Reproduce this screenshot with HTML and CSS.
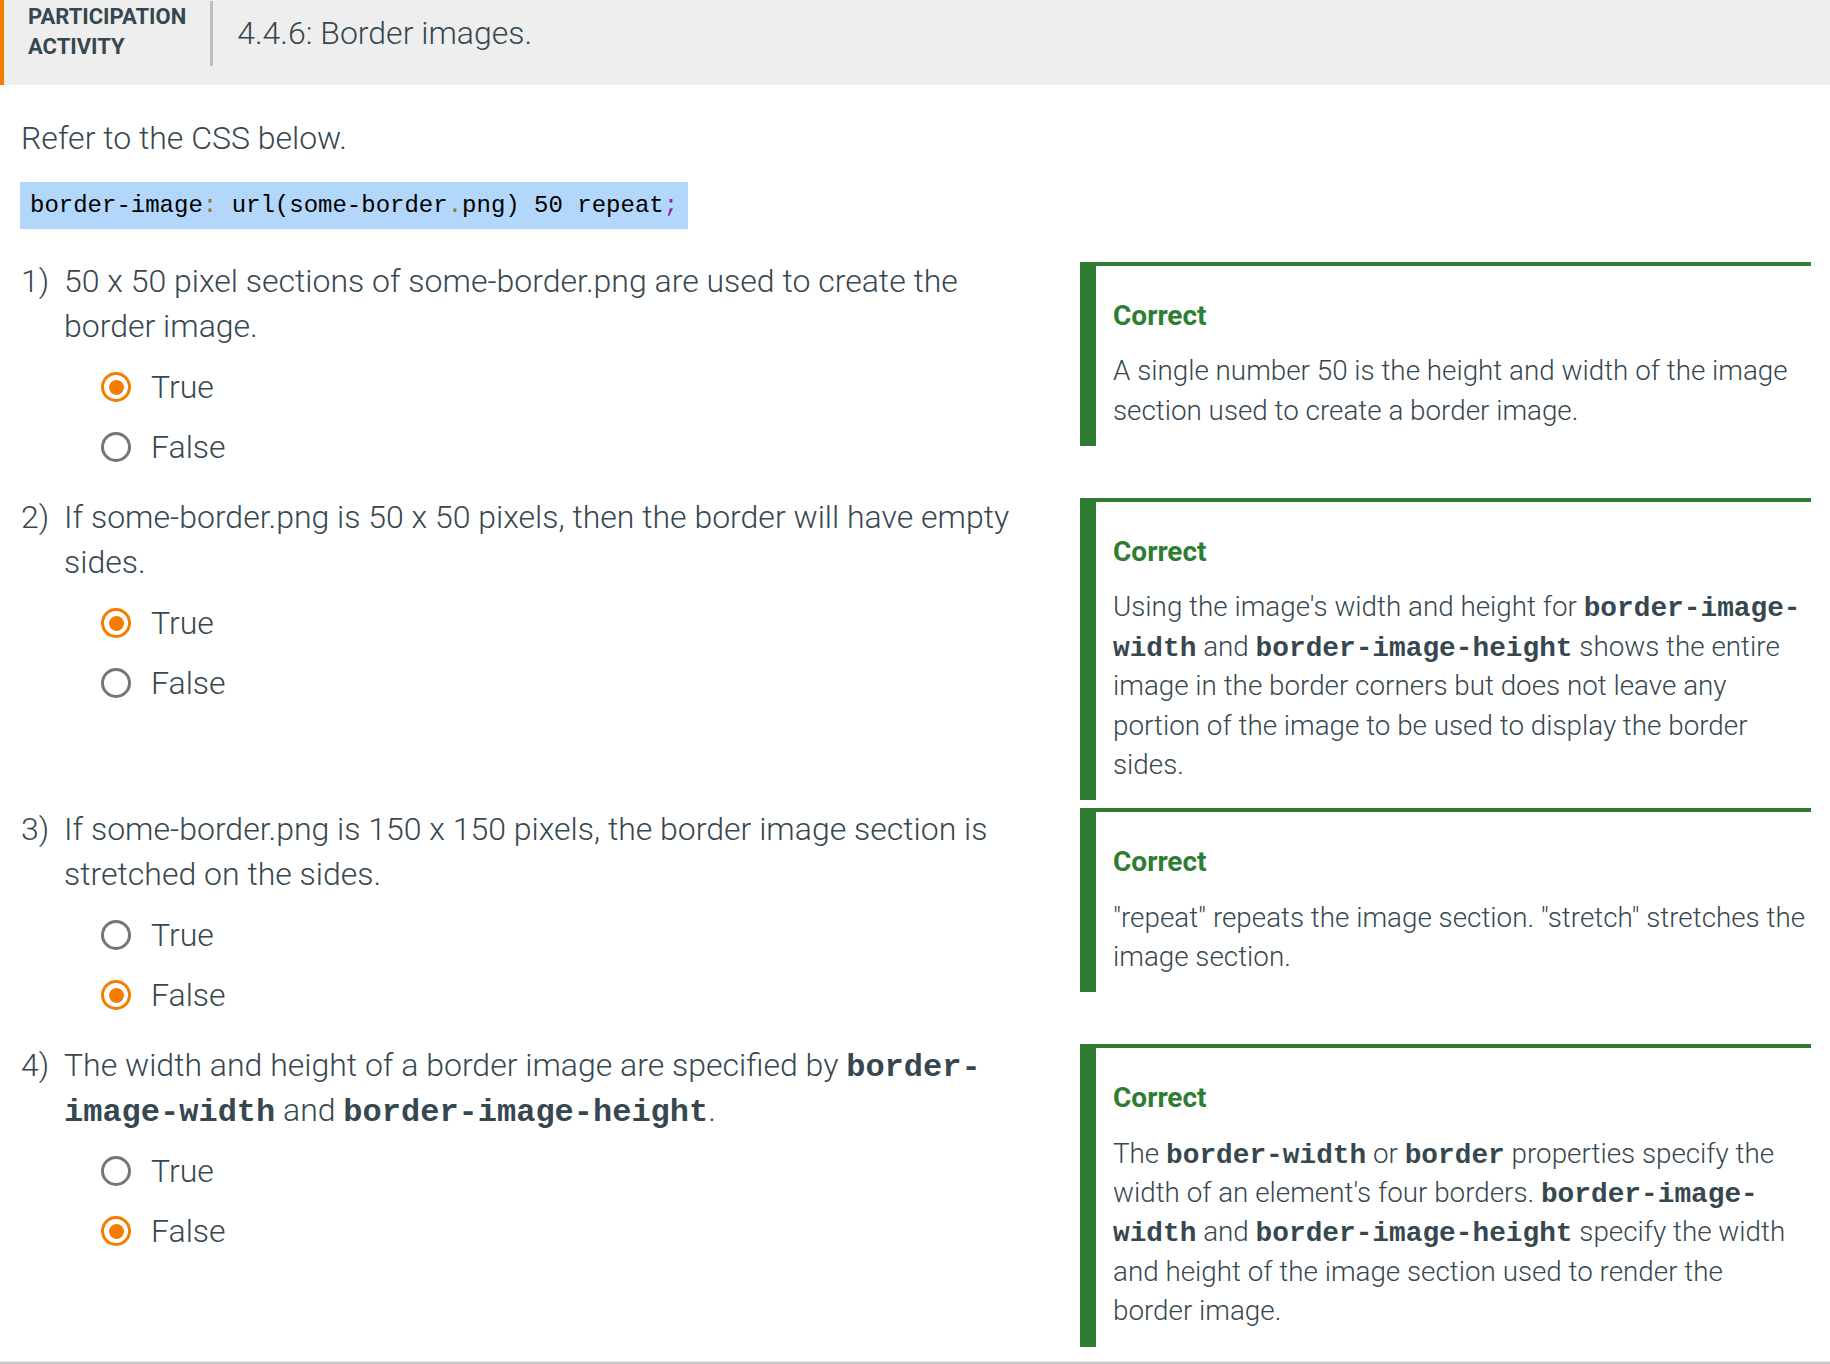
FILE: index.html
```html
<!DOCTYPE html>
<html lang="en">
<head>
<meta charset="utf-8">
<title>4.4.6: Border images.</title>
<link rel="stylesheet" href="styles.css">
</head>
<body>
<div class="activity">
  <header class="activity-header">
    <div class="activity-label">Participation<br>Activity</div>
    <div class="activity-divider"></div>
    <h1 class="activity-title">4.4.6: Border images.</h1>
  </header>

  <div class="activity-body">
    <p class="instructions">Refer to the CSS below.</p>
    <pre class="code-block">border-image<span class="tok-punct">:</span> url(some-border<span class="tok-punct">.</span>png) 50 repeat<span class="tok-semi">;</span></pre>

    <div class="question-list">
      <div class="question-row">
        <div class="question">
          <div class="prompt"><span class="q-num">1)</span><span class="q-body">50 x 50 pixel sections of some-border.png are used to create the border image.</span></div>
          <div class="choices">
            <div class="choice"><span class="radio checked"></span><span class="choice-label">True</span></div>
            <div class="choice"><span class="radio"></span><span class="choice-label">False</span></div>
          </div>
        </div>
        <div class="feedback">
          <h2 class="feedback-title">Correct</h2>
          <p class="feedback-text">A single number 50 is the height and width of the image section used to create a border image.</p>
        </div>
      </div>

      <div class="question-row">
        <div class="question">
          <div class="prompt"><span class="q-num">2)</span><span class="q-body">If some-border.png is 50 x 50 pixels, then the border will have empty sides.</span></div>
          <div class="choices">
            <div class="choice"><span class="radio checked"></span><span class="choice-label">True</span></div>
            <div class="choice"><span class="radio"></span><span class="choice-label">False</span></div>
          </div>
        </div>
        <div class="feedback">
          <h2 class="feedback-title">Correct</h2>
          <p class="feedback-text">Using the image's width and height for <code>border-image-</code><code>width</code> and <code>border-image-height</code> shows the entire image in the border corners but does not leave any portion of the image to be used to display the border sides.</p>
        </div>
      </div>

      <div class="question-row row-3">
        <div class="question">
          <div class="prompt"><span class="q-num">3)</span><span class="q-body">If some-border.png is 150 x 150 pixels, the border image section is stretched on the sides.</span></div>
          <div class="choices">
            <div class="choice"><span class="radio"></span><span class="choice-label">True</span></div>
            <div class="choice"><span class="radio checked"></span><span class="choice-label">False</span></div>
          </div>
        </div>
        <div class="feedback">
          <h2 class="feedback-title">Correct</h2>
          <p class="feedback-text">"repeat" repeats the image section. "stretch" stretches the image section.</p>
        </div>
      </div>

      <div class="question-row row-4">
        <div class="question">
          <div class="prompt"><span class="q-num">4)</span><span class="q-body">The width and height of a border image are specified by <code>border-</code><code>image-width</code> and <code>border-image-height</code>.</span></div>
          <div class="choices">
            <div class="choice"><span class="radio"></span><span class="choice-label">True</span></div>
            <div class="choice"><span class="radio checked"></span><span class="choice-label">False</span></div>
          </div>
        </div>
        <div class="feedback">
          <h2 class="feedback-title">Correct</h2>
          <p class="feedback-text">The <code>border-width</code> or <code>border</code> properties specify the width of an element's four borders. <code>border-image-</code><code>width</code> and <code>border-image-height</code> specify the width and height of the image section used to render the border image.</p>
        </div>
      </div>
    </div>
  </div>
  <div class="activity-end"></div>
</div>
</body>
</html>
```

FILE: styles.css
```css
* {
  box-sizing: border-box;
}

html, body {
  margin: 0;
  padding: 0;
  background: #ffffff;
}

body {
  font-family: Roboto, "Noto Sans", "Liberation Sans", sans-serif;
  color: #37474f;
}

.activity {
  width: 100%;
}

/* Header */
.activity-header {
  display: flex;
  align-items: flex-start;
  height: 85px;
  background: #eeeeee;
  border-left: 4px solid #f57c00;
}

.activity-label {
  padding: 2px 0 0 24px;
  font-size: 22px;
  font-weight: 700;
  line-height: 29.75px;
  text-transform: uppercase;
  color: #37474f;
}

.activity-divider {
  width: 3px;
  height: 65px;
  margin: 1px 0 0 24px;
  background: #bdbdbd;
}

.activity-title {
  margin: 0 0 0 24px;
  padding-top: 13px;
  font-size: 32px;
  font-weight: 300;
  line-height: 40px;
  color: #37474f;
}

/* Body */
.activity-body {
  padding: 0 19px 9px 21px;
}

.instructions {
  margin: 31px 0 0;
  font-size: 32px;
  font-weight: 300;
  line-height: 45px;
}

.code-block {
  display: inline-block;
  margin: 21px 0 30px -1px;
  padding: 0 10px;
  height: 47px;
  line-height: 47px;
  background: #b3d7fb;
  color: #000000;
  font-family: "Liberation Mono", "DejaVu Sans Mono", monospace;
  font-size: 24px;
  white-space: pre;
}

.tok-punct {
  color: #8a7b2b;
}

.tok-semi {
  color: #a21caf;
}

code {
  font-family: "Liberation Mono", "DejaVu Sans Mono", monospace;
  font-weight: 700;
  font-size: 1em;
  line-height: 1;
  color: #37474f;
}

/* Questions */
.question-row {
  display: grid;
  grid-template-columns: 1fr 731px;
  column-gap: 40px;
  align-items: start;
  margin-bottom: 5px;
}

.question-row.row-3 {
  padding-top: 2px;
}

.question-row.row-3 .feedback,
.question-row.row-4 .feedback {
  margin-top: 1px;
}

.question {
  padding-bottom: 13px;
}

.prompt {
  display: flex;
  font-size: 32px;
  font-weight: 300;
  line-height: 45px;
}

.q-num {
  flex: none;
  width: 43px;
}

.q-body {
  flex: 1;
}

.choices {
  margin-top: 8px;
  padding-left: 80px;
}

.choice {
  display: flex;
  align-items: center;
  height: 60px;
  font-size: 32px;
  font-weight: 300;
}

.radio {
  flex: none;
  width: 30px;
  height: 30px;
  border: 3.5px solid #757575;
  border-radius: 50%;
  margin-right: 20px;
  display: flex;
  align-items: center;
  justify-content: center;
}

.radio.checked {
  border-color: #f57c00;
}

.radio.checked::after {
  content: "";
  width: 15px;
  height: 15px;
  border-radius: 50%;
  background: #f57c00;
}

/* Feedback */
.feedback {
  margin-top: 3px;
  border-top: 4px solid #2e7d32;
  border-left: 16px solid #2e7d32;
  padding: 30px 4px 16px 17px;
  background: #ffffff;
}

.feedback-title {
  margin: 0 0 16px;
  font-size: 28px;
  font-weight: 700;
  line-height: 39.375px;
  color: #2e7d32;
}

.feedback-text {
  margin: 0;
  font-size: 27.8px;
  font-weight: 300;
  line-height: 39.375px;
}

.activity-end {
  height: 4px;
  border-top: 1px solid #ececec;
  background: #c8c8c8;
}
```
